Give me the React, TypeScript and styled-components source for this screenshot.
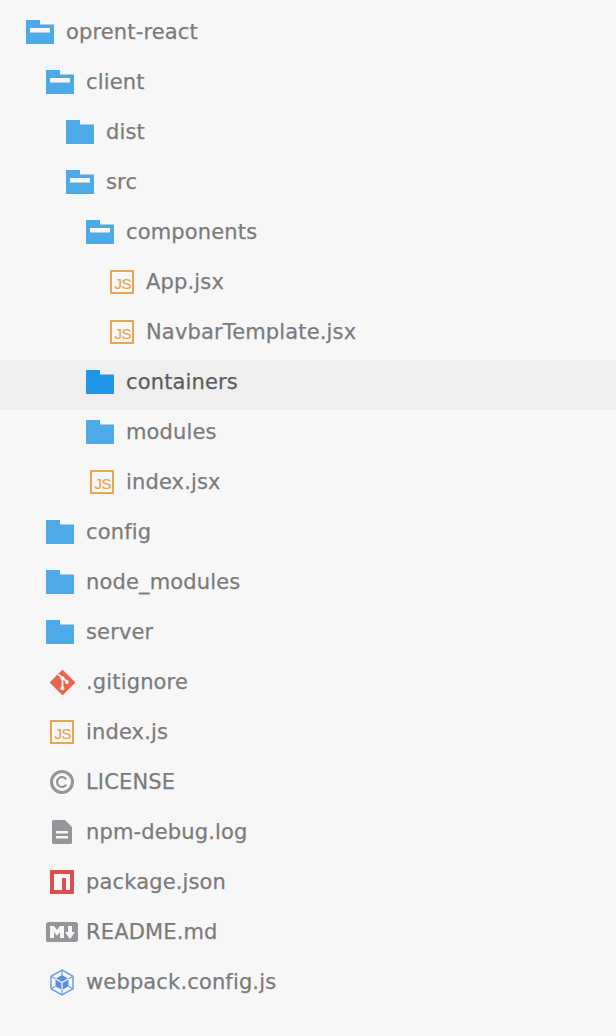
import React from "react";
import styled, { createGlobalStyle } from "styled-components";

const GlobalStyle = createGlobalStyle`
  html, body {
    margin: 0;
    padding: 0;
    background: #f7f7f7;
  }
`;

const Tree = styled.div`
  width: 616px;
  height: 1036px;
  padding-top: 10px;
  box-sizing: border-box;
  overflow: hidden;
  background: #f7f7f7;
  font-family: "DejaVu Sans", sans-serif;
`;

const Row = styled.div<{ $depth: number; $selected?: boolean }>`
  display: flex;
  align-items: center;
  height: 50px;
  padding-bottom: 6px;
  padding-left: ${(p) => 26 + p.$depth * 20}px;
  box-sizing: border-box;
  background: ${(p) => (p.$selected ? "#efefef" : "transparent")};
  color: ${(p) => (p.$selected ? "#5c5c5c" : "#7b7b7b")};
`;

const IconSlot = styled.div`
  flex: none;
  display: flex;
  justify-content: center;
  width: 32px;
  margin-right: 8px;
`;

const FolderSlot = styled.div`
  display: flex;
  width: 32px;
`;

const Label = styled.span`
  font-size: 21px;
  line-height: 28px;
  white-space: nowrap;
  letter-spacing: 0.15px;
  -webkit-text-stroke: 0.25px currentColor;
`;

const JsBox = styled.div`
  box-sizing: border-box;
  display: flex;
  align-items: flex-end;
  justify-content: flex-end;
  width: 24px;
  height: 24px;
  padding: 0 1px 1px 0;
  border: 2.500px solid #e6a652;
  color: #e6a652;
  font-family: "Liberation Sans", sans-serif;
  font-size: 15px;
  line-height: 14px;
  letter-spacing: -0.5px;
  -webkit-text-stroke: 0.2px currentColor;
`;

const FolderIcon = ({ open, selected }: { open?: boolean; selected?: boolean }) => (
  <FolderSlot>
    <svg width="28" height="24" viewBox="0 0 28 24">
      <path d="M0 0H14V4.500H28V24H0Z" fill={selected ? "#2196e8" : "#4daae8"} />
      {open && <rect x="4" y="8" width="20" height="4.500" fill="#f7f7f7" />}
    </svg>
  </FolderSlot>
);

const GitIcon = () => (
  <svg width="25" height="25" viewBox="0 0 26 26">
    <path
      d="M13 0a1 1 0 0 1 .7.300l12 12a1 1 0 0 1 0 1.400l-12 12a1 1 0 0 1-1.400 0l-12-12a1 1 0 0 1 0-1.400l12-12A1 1 0 0 1 13 0Z"
      fill="#e8654f"
    />
    <path d="M8.500 4.500 17.500 12M13 8V19" stroke="#f7f7f7" strokeWidth="1.800" fill="none" />
    <circle cx="13" cy="8.500" r="2" fill="#f7f7f7" />
    <circle cx="13" cy="19" r="2" fill="#f7f7f7" />
    <circle cx="17.500" cy="12.500" r="2" fill="#f7f7f7" />
  </svg>
);

const CopyrightIcon = () => (
  <svg width="24" height="24" viewBox="0 0 24 24" fill="none" stroke="#949699">
    <circle cx="12" cy="12" r="10.500" strokeWidth="3" />
    <path d="M16.300 9.300a5 5 0 1 0 0 5.400" strokeWidth="2.200" />
  </svg>
);

const DocIcon = () => (
  <svg width="20" height="24" viewBox="0 0 20 24">
    <path
      d="M1.500 0H13L20 7V22.500A1.500 1.500 0 0 1 18.500 24H1.500A1.500 1.500 0 0 1 0 22.500V1.500A1.500 1.500 0 0 1 1.500 0Z"
      fill="#949699"
    />
    <rect x="4" y="11" width="12" height="2.500" fill="#f7f7f7" />
    <rect x="4" y="16" width="12" height="2.500" fill="#f7f7f7" />
  </svg>
);

const NpmIcon = () => (
  <svg width="24" height="24" viewBox="0 0 24 24">
    <rect width="24" height="24" fill="#dd4c4f" />
    <path d="M4 20V4H20V20H16V8H12V20Z" fill="#f7f7f7" />
  </svg>
);

const MarkdownIcon = () => (
  <svg width="32" height="20" viewBox="0 3 16 10">
    <path
      d="M14.85 3H1.15C.52 3 0 3.52 0 4.15v7.69C0 12.48.52 13 1.15 13h13.69c.64 0 1.15-.52 1.15-1.150v-7.700C16 3.52 15.48 3 14.85 3zM9 11H7V8L5.500 9.920 4 8v3H2V5h2l1.500 2L7 5h2v6zm2.990.5L9.500 8H11V5h2v3h1.500l-2.510 3.500z"
      fill="#949699"
      fillRule="evenodd"
    />
  </svg>
);

const WebpackIcon = () => (
  <svg width="24" height="27" viewBox="0 0 24 27" fill="none">
    <path d="M12 1 23 7.250V19.750L12 26 1 19.750V7.250Z" stroke="#6f9fe6" strokeWidth="1.500" />
    <path d="M12 6 18.500 9.750V17.250L12 21 5.500 17.250V9.750Z" fill="#5a8fe0" />
    <path d="M1 7.250 5.500 9.750M23 7.250 18.500 9.750M1 19.750 5.500 17.250M23 19.750 18.500 17.250M12 1V6M12 26V21" stroke="#6f9fe6" strokeWidth="1.200" />
    <path d="M5.500 9.750 12 13.500 18.500 9.750M12 13.500V21" stroke="#f7f7f7" strokeWidth="1.200" />
  </svg>
);

const JsIcon = () => <JsBox>JS</JsBox>;

const rows: { depth: number; label: string; icon: React.ReactNode; selected?: boolean }[] = [
  { depth: 0, label: "oprent-react", icon: <FolderIcon open /> },
  { depth: 1, label: "client", icon: <FolderIcon open /> },
  { depth: 2, label: "dist", icon: <FolderIcon /> },
  { depth: 2, label: "src", icon: <FolderIcon open /> },
  { depth: 3, label: "components", icon: <FolderIcon open /> },
  { depth: 4, label: "App.jsx", icon: <JsIcon /> },
  { depth: 4, label: "NavbarTemplate.jsx", icon: <JsIcon /> },
  { depth: 3, label: "containers", icon: <FolderIcon selected />, selected: true },
  { depth: 3, label: "modules", icon: <FolderIcon /> },
  { depth: 3, label: "index.jsx", icon: <JsIcon /> },
  { depth: 1, label: "config", icon: <FolderIcon /> },
  { depth: 1, label: "node_modules", icon: <FolderIcon /> },
  { depth: 1, label: "server", icon: <FolderIcon /> },
  { depth: 1, label: ".gitignore", icon: <GitIcon /> },
  { depth: 1, label: "index.js", icon: <JsIcon /> },
  { depth: 1, label: "LICENSE", icon: <CopyrightIcon /> },
  { depth: 1, label: "npm-debug.log", icon: <DocIcon /> },
  { depth: 1, label: "package.json", icon: <NpmIcon /> },
  { depth: 1, label: "README.md", icon: <MarkdownIcon /> },
  { depth: 1, label: "webpack.config.js", icon: <WebpackIcon /> },
];

const App = () => (
  <>
    <GlobalStyle />
    <Tree>
      {rows.map((row) => (
        <Row key={row.label} $depth={row.depth} $selected={row.selected}>
          <IconSlot>{row.icon}</IconSlot>
          <Label>{row.label}</Label>
        </Row>
      ))}
    </Tree>
  </>
);

export default App;
